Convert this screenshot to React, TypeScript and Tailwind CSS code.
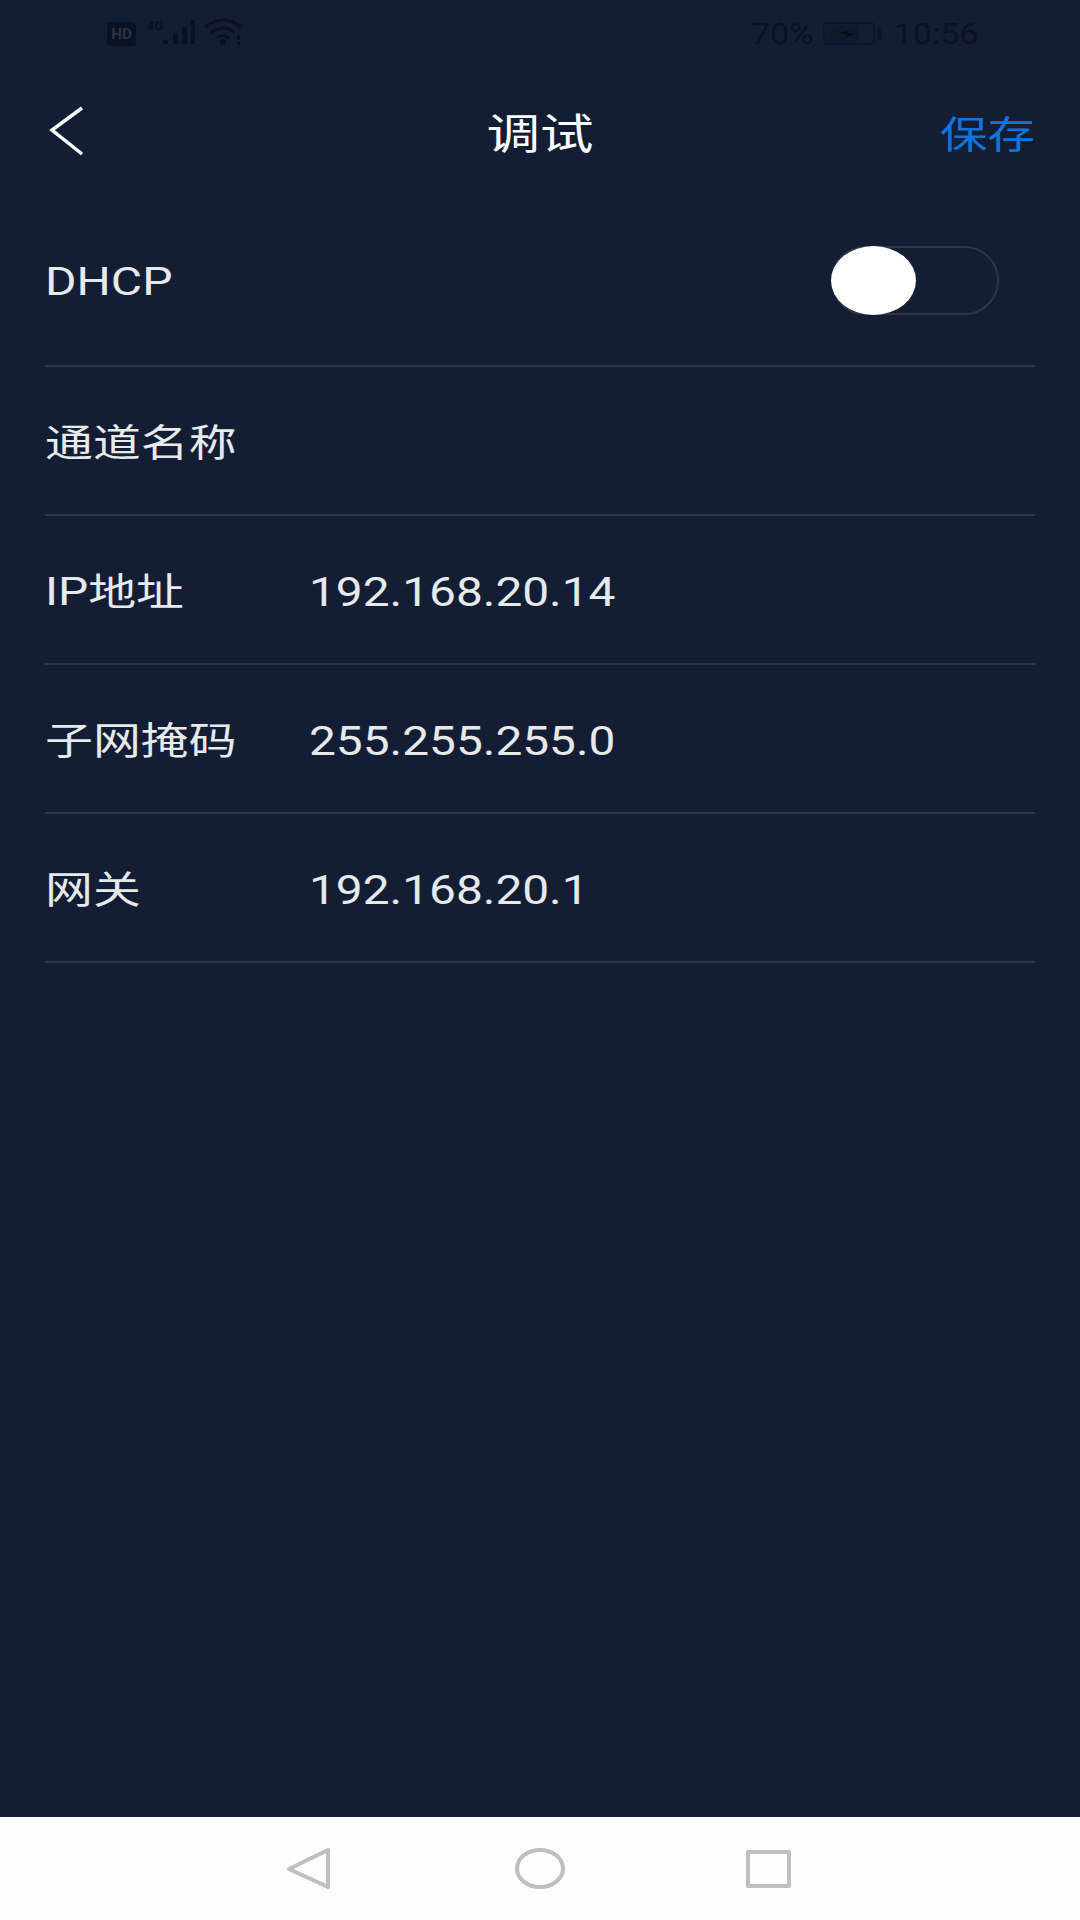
import React from 'react';

const rows = [
  { label: '通道名称', value: '' },
  { label: 'IP地址', value: '192.168.20.14' },
  { label: '子网掩码', value: '255.255.255.0' },
  { label: '网关', value: '192.168.20.1' },
];

const font = "font-['Roboto','Noto_Sans_CJK_SC',sans-serif]";

export default function App() {
  return (
    <div className={`${font} w-[1080px] h-[1920px] flex flex-col bg-[#131e35] overflow-hidden`}>
      {/* status bar */}
      <div className="h-[66px] shrink-0 flex items-center justify-between pl-[107px] pr-[101px] pt-[2px] text-[#0c1221]">
        <div className="flex items-start">
          <div className="w-[29px] h-[24px] mt-[6px] rounded-[4px] bg-[#0b1120] flex items-center justify-center text-[15px] font-bold leading-none text-[#2a3346]">HD</div>
          <svg width="100" height="36" viewBox="0 0 100 36" className="ml-[10px]" fill="#0b1120">
            <text x="1" y="14" fontSize="13" fontWeight="700" fontFamily="Roboto">4G</text>
            <rect x="17" y="24" width="5" height="4" />
            <rect x="27" y="17" width="5" height="11" />
            <rect x="36" y="11" width="5" height="17" />
            <rect x="45" y="4" width="4" height="24" />
            <path d="M59 11 Q77 -3 95 11 M65 17 Q77 7 89 17 M71 22 Q77 17 83 22" fill="none" stroke="#0b1120" strokeWidth="3" />
            <circle cx="77" cy="26" r="3" />
            <rect x="91" y="19" width="3" height="5" />
            <rect x="91" y="26" width="3" height="3" />
          </svg>
        </div>
        <div className="flex items-center text-[30px] leading-none">
          <span className="inline-block origin-right scale-x-[1.12]">70%</span>
          <svg width="60" height="24" viewBox="0 0 60 24" className="ml-[10px]">
            <rect x="1" y="1" width="50" height="21" rx="3" fill="none" stroke="#0e1524" strokeWidth="1.5" />
            <rect x="3" y="3" width="33" height="17" fill="#0e1524" opacity="0.5" />
            <path d="M14 11 L26 9 L24 11 L34 12 L22 15 L24 12 Z" fill="#080c16" />
            <rect x="54" y="6" width="4" height="12" fill="#0e1524" />
          </svg>
          <span className="ml-[21px] inline-block origin-right scale-x-[1.14]">10:56</span>
        </div>
      </div>

      {/* header */}
      <div className="h-[134px] shrink-0 pt-[4px] relative flex items-center justify-center">
        <svg width="40" height="52" viewBox="0 0 40 52" className="absolute left-[47px] top-[39px]">
          <path d="M35 3 L5 25 L35 49" fill="none" stroke="#ffffff" strokeWidth="3.5" />
        </svg>
        <span className="inline-block text-[42px] leading-none text-white scale-x-[1.275]">调试</span>
        <span className="absolute right-[45px] inline-block text-[38px] leading-none text-[#1173dc] origin-right scale-x-[1.25]">保存</span>
      </div>

      {/* form */}
      <div className="px-[45px]">
        <div className="h-[167px] pb-[5px] flex items-center justify-between pr-[36px] border-b-2 border-[#2c3647]">
          <span className="inline-block mt-[4px] text-[38px] leading-none text-[#e8e9eb] origin-left scale-x-[1.265]">DHCP</span>
          <div className="relative w-[168px] h-[69px] rounded-[35px] border-2 border-[#2c3647]">
            <div className="absolute -left-[2px] -top-[2px] w-[85px] h-[69px] rounded-[50%] bg-white" />
          </div>
        </div>
        {rows.map((r) => (
          <div key={r.label} className="h-[149px] pt-[6px] flex items-center border-b-2 border-[#2c3647]">
            <div className="w-[264px]">
              <span className="inline-block text-[38px] leading-none text-[#e8e9eb] origin-left scale-x-[1.26]">{r.label}</span>
            </div>
            <span className="inline-block text-[40px] leading-none text-[#e8e9eb] origin-left scale-x-[1.195]">{r.value}</span>
          </div>
        ))}
      </div>

      <div className="flex-1" />

      {/* navigation bar */}
      <div className="h-[103px] shrink-0 bg-[#fdfdfd] flex items-center justify-center gap-[183px] pr-[2px]">
        <svg width="44" height="41" viewBox="0 0 44 41" fill="none" stroke="#bfbfbf" strokeWidth="4" strokeLinejoin="round">
          <path d="M2 21 L41 2 L41 39 Z" />
        </svg>
        <svg width="50" height="41" viewBox="0 0 50 41" fill="none" stroke="#bfbfbf" strokeWidth="4" className="ml-[1px]">
          <ellipse cx="25" cy="20.5" rx="23" ry="18.5" />
        </svg>
        <svg width="45" height="38" viewBox="0 0 45 38" fill="none" stroke="#bfbfbf" strokeWidth="4" strokeLinejoin="round" className="-ml-[2px]">
          <rect x="2" y="2" width="41" height="34" />
        </svg>
      </div>
    </div>
  );
}
